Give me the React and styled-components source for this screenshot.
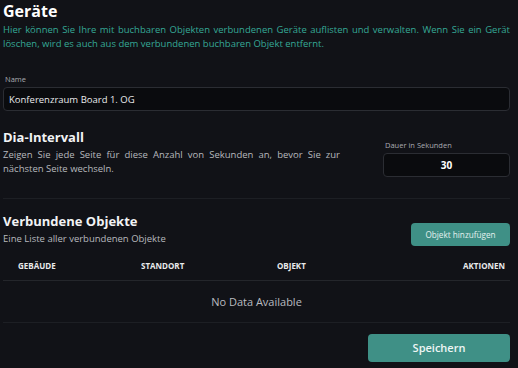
import React, { useState } from 'react';
import styled, { createGlobalStyle } from 'styled-components';

const GlobalStyle = createGlobalStyle`
  * { box-sizing: border-box; }
  html, body {
    margin: 0;
    padding: 0;
    background: #111217;
  }
  body {
    font-family: "Open Sans", "DejaVu Sans", sans-serif;
    color: #e6e7ea;
  }
`;

const columns = ['Gebäude', 'Standort', 'Objekt', 'Aktionen'];

const App = () => {
  const [name, setName] = useState('Konferenzraum Board 1. OG');
  const [duration, setDuration] = useState('30');
  const objects = [];

  return (
    <Page>
      <GlobalStyle />
      <Title>Geräte</Title>
      <Intro>
        Hier können Sie Ihre mit buchbaren Objekten verbundenen Geräte auflisten und verwalten. Wenn Sie ein Gerät
        löschen, wird es auch aus dem verbundenen buchbaren Objekt entfernt.
      </Intro>

      <Field>
        <Label>Name</Label>
        <Input value={name} onChange={(e) => setName(e.target.value)} />
      </Field>

      <IntervalRow>
        <div>
          <SectionTitle>Dia-Intervall</SectionTitle>
          <Muted $justify>
            Zeigen Sie jede Seite für diese Anzahl von Sekunden an, bevor Sie zur nächsten Seite wechseln.
          </Muted>
        </div>
        <DurationField>
          <Label>Dauer in Sekunden</Label>
          <Input $center value={duration} onChange={(e) => setDuration(e.target.value)} />
        </DurationField>
      </IntervalRow>

      <Divider />

      <ObjectsHeader>
        <div>
          <SectionTitle>Verbundene Objekte</SectionTitle>
          <Muted>Eine Liste aller verbundenen Objekte</Muted>
        </div>
        <AddButton>Objekt hinzufügen</AddButton>
      </ObjectsHeader>

      <Table>
        <thead>
          <tr>
            {columns.map((col, i) => (
              <Th key={col} $last={i === columns.length - 1}>{col}</Th>
            ))}
          </tr>
        </thead>
        <tbody>
          {objects.length === 0 && (
            <tr>
              <Empty colSpan={columns.length}>No Data Available</Empty>
            </tr>
          )}
        </tbody>
      </Table>

      <Footer>
        <SaveButton>Speichern</SaveButton>
      </Footer>
    </Page>
  );
};

export default App;

const Page = styled.div`
  width: 518px;
  height: 368px;
  overflow: hidden;
  padding: 1px 8px 0 3px;
  display: flex;
  flex-direction: column;
`;

const Title = styled.h1`
  margin: 0;
  font-size: 16px;
  font-weight: 700;
  line-height: 20px;
  color: #ffffff;
`;

const Intro = styled.p`
  margin: 2px 0 0;
  font-size: 9.5px;
  line-height: 14px;
  color: #35a896;
  text-align: justify;
`;

const Field = styled.div`
  margin-top: 23px;
  display: flex;
  flex-direction: column;
`;

const Label = styled.label`
  font-size: 7.5px;
  color: #a9abb1;
  padding-left: 2px;
  margin-bottom: 3px;
`;

const Input = styled.input`
  width: 100%;
  height: 24px;
  background: #0a0b0e;
  border: 1px solid #2b2d33;
  border-radius: 4px;
  color: ${(p) => (p.$center ? '#ffffff' : '#e9eaec')};
  font-family: inherit;
  font-size: ${(p) => (p.$center ? '10px' : '9.5px')};
  font-weight: ${(p) => (p.$center ? 700 : 400)};
  text-align: ${(p) => (p.$center ? 'center' : 'left')};
  padding: 0 5px;
  outline: none;
`;

const IntervalRow = styled.div`
  margin-top: 17px;
  display: grid;
  grid-template-columns: 337px 1fr;
  gap: 43px;
  align-items: start;
`;

const SectionTitle = styled.h2`
  margin: 0;
  font-size: 13px;
  font-weight: 700;
  line-height: 18px;
  color: #f2f3f5;
`;

const Muted = styled.p`
  margin: 2px 0 0;
  font-size: 9.5px;
  line-height: 14px;
  color: #b7b9be;
  text-align: ${(p) => (p.$justify ? 'justify' : 'left')};
`;

const DurationField = styled.div`
  margin-top: 12px;
  display: flex;
  flex-direction: column;
`;

const Divider = styled.hr`
  margin: 21px 0 0;
  border: none;
  border-top: 1px solid #1d1f24;
`;

const ObjectsHeader = styled.div`
  margin-top: 13px;
  display: flex;
  justify-content: space-between;
  align-items: flex-start;
`;

const AddButton = styled.button`
  margin-top: 11px;
  width: 99px;
  height: 23px;
  border: none;
  border-radius: 4px;
  background: #3f9086;
  color: #e4f1ef;
  font-family: inherit;
  font-size: 8.2px;
  cursor: pointer;
`;

const Table = styled.table`
  margin-top: 6px;
  width: 100%;
  border-collapse: collapse;
  table-layout: fixed;
`;

const Th = styled.th`
  height: 28px;
  padding: 0 ${(p) => (p.$last ? '5px' : '0')} 0 15px;
  text-align: ${(p) => (p.$last ? 'right' : 'left')};
  font-size: 8px;
  font-weight: 700;
  text-transform: uppercase;
  color: #e9eaec;
  border-bottom: 1px solid #24262b;

  &:nth-child(1) { width: 123px; }
  &:nth-child(2) { width: 136px; }
  &:nth-child(3) { width: 130px; }
`;

const Empty = styled.td`
  height: 42px;
  text-align: center;
  font-size: 11px;
  color: #b9bbc0;
  border-bottom: 1px solid #1d1f24;
`;

const Footer = styled.div`
  margin-top: 11px;
  display: flex;
  justify-content: flex-end;
`;

const SaveButton = styled.button`
  width: 142px;
  height: 28px;
  border: none;
  border-radius: 4px;
  background: #3f9086;
  color: #eef6f5;
  font-family: inherit;
  font-size: 11px;
  font-weight: 600;
  cursor: pointer;
`;
